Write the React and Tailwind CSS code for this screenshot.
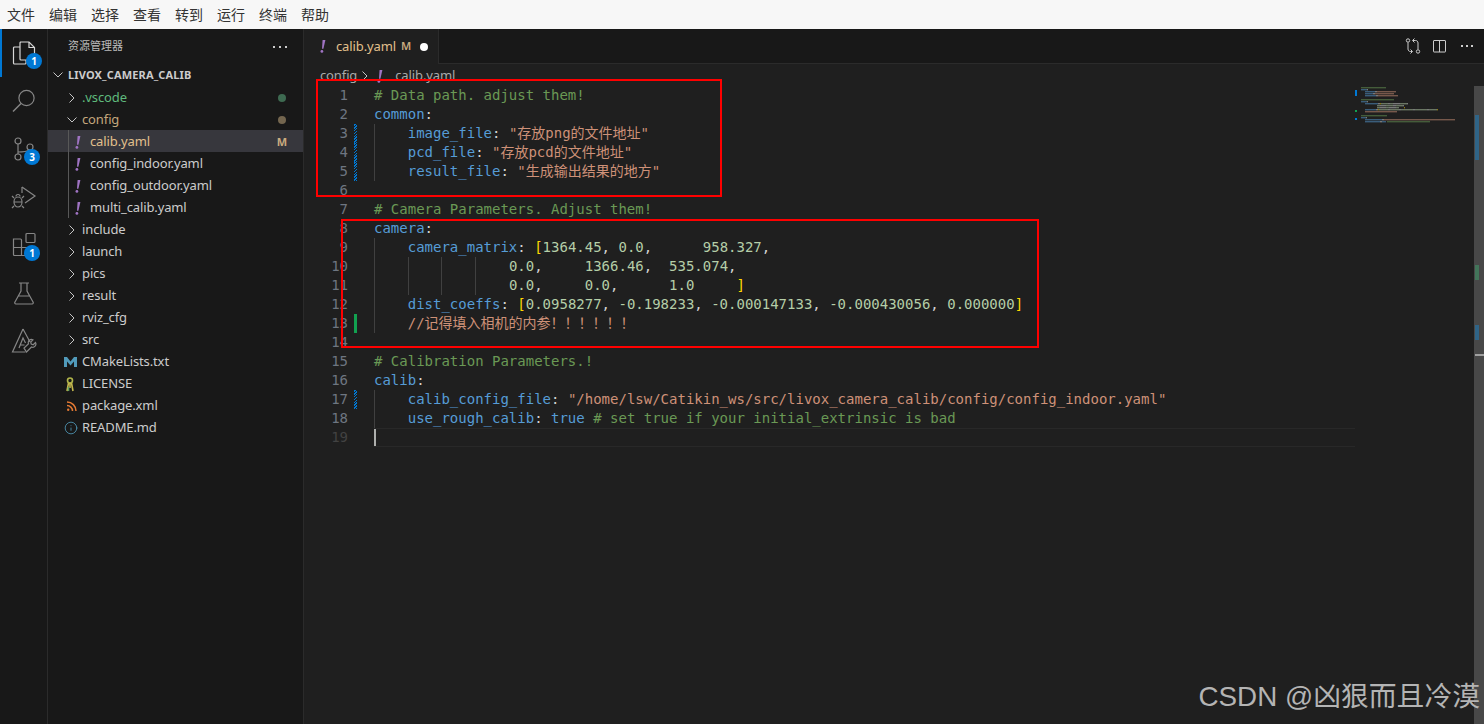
import React from 'react';
import { Info } from 'lucide-react';

const MONO = "font-['DejaVu_Sans_Mono','Noto_Sans_CJK_SC',monospace]";
const UI = "font-['Noto_Sans','Noto_Sans_CJK_SC',sans-serif]";

const tokenClass = {
    c: 'text-[#6a9955]',
    k: 'text-[#569cd6]',
    s: 'text-[#ce9178]',
    n: 'text-[#b5cea8]',
    p: 'text-[#d4d4d4]',
    b: 'text-[#ffd700]',
};
const minimapColor = { c: '#6a9955', k: '#569cd6', s: '#ce9178', n: '#b5cea8', p: '#d4d4d4', b: '#ffd700' };

// g = indent guides (each one is 4 columns), t = tokens after the indent
const codeLines = [
    { t: [['# Data path. adjust them!', 'c']] },
    { t: [['common', 'k'], [':', 'p']] },
    { g: 1, mark: 'mod', t: [['image_file', 'k'], [': ', 'p'], ['"存放png的文件地址"', 's']] },
    { g: 1, mark: 'mod', t: [['pcd_file', 'k'], [': ', 'p'], ['"存放pcd的文件地址"', 's']] },
    { g: 1, mark: 'mod', t: [['result_file', 'k'], [': ', 'p'], ['"生成输出结果的地方"', 's']] },
    { t: [] },
    { t: [['# Camera Parameters. Adjust them!', 'c']] },
    { t: [['camera', 'k'], [':', 'p']] },
    { g: 1, t: [['camera_matrix', 'k'], [': ', 'p'], ['[', 'b'], ['1364.45', 'n'], [', ', 'p'], ['0.0', 'n'], [',      ', 'p'], ['958.327', 'n'], [',', 'p']] },
    { g: 4, t: [['0.0', 'n'], [',     ', 'p'], ['1366.46', 'n'], [',  ', 'p'], ['535.074', 'n'], [',', 'p']] },
    { g: 4, t: [['0.0', 'n'], [',     ', 'p'], ['0.0', 'n'], [',      ', 'p'], ['1.0', 'n'], ['     ', 'p'], [']', 'b']] },
    { g: 1, t: [['dist_coeffs', 'k'], [': ', 'p'], ['[', 'b'], ['0.0958277', 'n'], [', ', 'p'], ['-0.198233', 'n'], [', ', 'p'], ['-0.000147133', 'n'], [', ', 'p'], ['-0.000430056', 'n'], [', ', 'p'], ['0.000000', 'n'], [']', 'b']] },
    { g: 1, mark: 'add', t: [['//记得填入相机的内参！！！！！！', 's']] },
    { t: [] },
    { t: [['# Calibration Parameters.!', 'c']] },
    { t: [['calib', 'k'], [':', 'p']] },
    { g: 1, mark: 'mod', t: [['calib_config_file', 'k'], [': ', 'p'], ['"/home/lsw/Catikin_ws/src/livox_camera_calib/config/config_indoor.yaml"', 's']] },
    { g: 1, t: [['use_rough_calib', 'k'], [': ', 'p'], ['true', 'k'], [' ', 'p'], ['# set true if your initial_extrinsic is bad', 'c']] },
    { t: [], current: true },
];

const menus = ['文件', '编辑', '选择', '查看', '转到', '运行', '终端', '帮助'];

function Badge({ n }) {
    return (
        <span className="absolute left-[24px] top-[24px] w-4 h-4 rounded-full bg-[#0078d4] text-white text-[10px] font-bold leading-4 text-center">
            {n}
        </span>
    );
}

function ActivityIcon({ active, badge, children }) {
    return (
        <div className={`relative w-12 h-12 flex items-center justify-center ${active ? 'text-[#d7d7d7] border-l-2 border-[#0078d4] pr-[2px]' : 'text-[#868686]'}`}>
            {children}
            {badge && <Badge n={badge} />}
        </div>
    );
}

function ActivityBar() {
    const s = { width: 26, height: 26, viewBox: '0 0 26 26', fill: 'none', stroke: 'currentColor', strokeWidth: 1.2 };
    return (
        <div className="w-12 shrink-0 bg-[#181818] border-r border-[#2b2b2b] flex flex-col">
            <ActivityIcon active badge="1">
                <svg {...s}>
                    <path d="M9 7H3.5a1 1 0 0 0-1 1v15a1 1 0 0 0 1 1H14a1 1 0 0 0 1-1v-3" />
                    <path d="M9 2h9l5.5 5.5V19a1 1 0 0 1-1 1H10a1 1 0 0 1-1-1V3a1 1 0 0 1 1-1z" />
                    <path d="M18 2v5.5h5.5" />
                </svg>
            </ActivityIcon>
            <ActivityIcon>
                <svg {...s}>
                    <circle cx="15.5" cy="10" r="7.6" />
                    <path d="M10 15.5 2 23.5" strokeWidth="1.5" />
                </svg>
            </ActivityIcon>
            <ActivityIcon badge="3">
                <svg {...s}>
                    <circle cx="7" cy="5" r="3" />
                    <circle cx="19" cy="11" r="3" />
                    <circle cx="7" cy="21" r="3" />
                    <path d="M7 8v10M7 16c6 0 10-1 12-2" />
                </svg>
            </ActivityIcon>
            <ActivityIcon>
                <svg {...s}>
                    <path d="M11 3l13 9-10 7" />
                    <path d="M11 3v6" />
                    <ellipse cx="7" cy="18" rx="4" ry="5" />
                    <path d="M3 18h8M3 14l-2-2M11 14l2-2M3 22l-2 2M11 22l2 2M5 12.5a2 2 0 0 1 4 0" />
                </svg>
            </ActivityIcon>
            <ActivityIcon badge="1">
                <svg {...s}>
                    <rect x="15" y="1.5" width="9" height="9" rx="1" />
                    <path d="M2.5 7h7a1 1 0 0 1 1 1v15.5H3.5a1 1 0 0 1-1-1zM2.5 15.5h17v7a1 1 0 0 1-1 1h-8" />
                </svg>
            </ActivityIcon>
            <ActivityIcon>
                <svg {...s}>
                    <path d="M8 3h10M10 3v8L4 22a1.2 1.2 0 0 0 1 2h16a1.2 1.2 0 0 0 1-2l-6-11V3M7 16h12" />
                </svg>
            </ActivityIcon>
            <ActivityIcon>
                <svg {...s}>
                    <path d="M12 1 1.5 24h13M12 1l7 13M8 20l4-10 2.5 5M9.5 17h4" />
                    <path d="M15.5 24l5-5a3.2 3.2 0 0 0 4-4.5l-2.3 2.2-2-.7-.5-2 2.2-2.2a3.2 3.2 0 0 0-4.4 4L13 20z" />
                </svg>
            </ActivityIcon>
        </div>
    );
}

function Chevron({ open, className = '' }) {
    return (
        <svg width="10" height="10" viewBox="0 0 10 10" fill="none" stroke="#c5c5c5" strokeWidth="1" className={className}>
            {open ? <path d="M0.5 2.5 5 7l4.5-4.5" /> : <path d="M2.5 0.5 7 5 2.5 9.5" />}
        </svg>
    );
}

// seti yaml icon, a slanted purple exclamation mark
function YamlIcon({ className = '' }) {
    return (
        <span className={`inline-flex items-center ${className}`}>
            <svg width="6" height="13" viewBox="0 0 6 13" fill="#a074c4">
                <path d="M2.6 0h2.8L3.4 8.8H2z" />
                <circle cx="1.9" cy="11.4" r="1.4" />
            </svg>
        </span>
    );
}

function Folder({ name, open, color = 'text-[#cccccc]', dot }) {
    return (
        <div className="h-[22px] flex items-center pt-[2px] pl-[19px] pr-[17px]">
            <Chevron open={open} className="w-[10px] shrink-0" />
            <span className={`ml-[5px] ${color}`}>{name}</span>
            {dot && <span className={`ml-auto w-2 h-2 rounded-full ${dot}`} />}
        </div>
    );
}

function YamlRow({ name, selected }) {
    return (
        <div className={`h-[22px] flex items-center pt-[2px] pl-[27px] pr-[16px] ${selected ? 'bg-[#37373d] text-[#e2c08d]' : 'text-[#cccccc]'}`}>
            <YamlIcon className="w-[15px] shrink-0" />
            <span>{name}</span>
            {selected && <span className="ml-auto text-[11px] font-bold text-[#c9ab7f]">M</span>}
        </div>
    );
}

function FileRow({ icon, name }) {
    return (
        <div className="h-[22px] flex items-center pt-[2px] pl-[16px] text-[#cccccc]">
            <span className="w-[18px] shrink-0 flex items-center justify-start">{icon}</span>
            <span>{name}</span>
        </div>
    );
}

function Sidebar() {
    return (
        <div className={`w-[256px] shrink-0 bg-[#181818] border-r border-[#2b2b2b] text-[13px] tracking-[-0.12px] ${UI}`}>
            <div className="h-[35px] flex items-center justify-between pl-5 pr-[16px] text-[11px] tracking-normal text-[#bbbbbb]">
                <span>资源管理器</span>
                <span className="flex gap-[4px]">
                    <i className="w-[2px] h-[2px] bg-[#cccccc]" />
                    <i className="w-[2px] h-[2px] bg-[#cccccc]" />
                    <i className="w-[2px] h-[2px] bg-[#cccccc]" />
                </span>
            </div>
            <div className="h-[22px] flex items-center pl-[5px] text-[11px] font-bold tracking-[0.15px] text-[#cccccc]">
                <Chevron open className="w-[10px] shrink-0" />
                <span className="ml-[5px]">LIVOX_CAMERA_CALIB</span>
            </div>
            <Folder name=".vscode" color="text-[#5fba7d]" dot="bg-[#3e6a51]" />
            <Folder name="config" open color="text-[#c4a77d]" dot="bg-[#74664f]" />
            <div className="relative">
                <YamlRow name="calib.yaml" selected />
                <YamlRow name="config_indoor.yaml" />
                <YamlRow name="config_outdoor.yaml" />
                <YamlRow name="multi_calib.yaml" />
                <div className="absolute left-[20px] top-0 bottom-0 w-px bg-[#585858]" />
            </div>
            {['include', 'launch', 'pics', 'result', 'rviz_cfg', 'src'].map((f) => (
                <Folder key={f} name={f} />
            ))}
            <FileRow
                name="CMakeLists.txt"
                icon={
                    <svg width="13" height="12" viewBox="0 0 13 12" fill="#519aba">
                        <path d="M0 1h3l3.5 4.5L10 1h3v10h-3V5.5L6.5 9.5 3 5.5V11H0z" />
                    </svg>
                }
            />
            <FileRow
                name="LICENSE"
                icon={
                    <svg width="12" height="15" viewBox="0 0 12 15" fill="none" strokeWidth="1.6">
                        <circle cx="6" cy="3.5" r="2.5" stroke="#b0b44a" />
                        <path d="M4.5 6 3 14M7.5 6 9 14M6 6v5" stroke="#c6b94f" />
                        <path d="M4.5 10v4" stroke="#5fa05f" />
                    </svg>
                }
            />
            <FileRow
                name="package.xml"
                icon={
                    <svg width="12" height="12" viewBox="0 0 12 12" fill="none" stroke="#e37933" strokeWidth="1.5" className="ml-[2px]">
                        <path d="M1 2c5 0 9 4 9 9M1 5.5c3 0 5.5 2.5 5.5 5.5" />
                        <circle cx="2.2" cy="9.8" r="1.2" fill="#e37933" stroke="none" />
                    </svg>
                }
            />
            <FileRow name="README.md" icon={<Info size={14} color="#519aba" strokeWidth={1.4} />} />
        </div>
    );
}

function TabBar() {
    return (
        <div className="h-[35px] shrink-0 flex bg-[#181818]">
            <div className={`w-[135px] flex items-center pl-[16px] bg-[#1f1f1f] border-r border-[#2b2b2b] text-[13px] tracking-[-0.12px] text-[#e2c08d] ${UI}`}>
                <YamlIcon className="w-[16px]" />
                <span>calib.yaml</span>
                <span className="ml-[5px] text-[11px] font-semibold text-[#c9ab7f]">M</span>
                <span className="ml-[9px] w-2 h-2 rounded-full bg-white" />
            </div>
            <div className="flex-1 border-b border-[#2b2b2b] flex items-center justify-end gap-[11px] pr-[9px]">
                <svg width="16" height="16" viewBox="0 0 16 16" fill="none" stroke="#cccccc" strokeWidth="1">
                    <circle cx="3" cy="2.5" r="1.7" />
                    <circle cx="13" cy="13.5" r="1.7" />
                    <path d="M3 4.5V11c0 1.5 1 2.5 2.5 2.5H7M13 11.5V5c0-1.5-1-2.5-2.5-2.5H8M9.5 0.5l-2 2 2 2M5.5 11.5l2 2-2 2" />
                </svg>
                <svg width="16" height="16" viewBox="0 0 16 16" fill="none" stroke="#cccccc" strokeWidth="1">
                    <rect x="1.5" y="2.5" width="12" height="11.5" rx="0.5" />
                    <path d="M7.5 2.5V14" />
                </svg>
                <span className="w-4 flex justify-center gap-[3px]">
                    <i className="w-[2px] h-[2px] bg-[#cccccc]" />
                    <i className="w-[2px] h-[2px] bg-[#cccccc]" />
                    <i className="w-[2px] h-[2px] bg-[#cccccc]" />
                </span>
            </div>
        </div>
    );
}

function Breadcrumb() {
    return (
        <div className={`h-[22px] shrink-0 flex items-center pt-[2px] pl-[16px] text-[13px] tracking-[-0.12px] text-[#a9a9a9] ${UI}`}>
            <span>config</span>
            <Chevron className="mx-[3px]" />
            <YamlIcon className="ml-[4px] w-[18px]" />
            <span>calib.yaml</span>
        </div>
    );
}

function CodeLine({ line, n }) {
    return (
        <div className="h-[19px] flex leading-[19px]">
            <div className={`w-[44px] shrink-0 text-right ${line.current ? 'text-[#424242]' : 'text-[#6e7681]'}`}>{n}</div>
            <div className="w-[26px] shrink-0 pl-[6px] pr-[15px]">
                {line.mark === 'mod' && <div className="w-[3px] h-[19px] bg-[repeating-linear-gradient(-45deg,#0078d4,#0078d4_1px,#1f1f1f_1px,#1f1f1f_2px)]" />}
                {line.mark === 'add' && <div className="w-[3px] h-[19px] bg-[#12a150]" />}
            </div>
            <div className={`flex-1 whitespace-pre relative ${line.current ? 'border-y border-[#282828] h-[19px] leading-[17px]' : ''}`}>
                {Array.from({ length: line.g || 0 }).map((_, i) => (
                    <span key={i} className="inline-block w-[33.72px] border-l border-[#404040]"> </span>
                ))}
                {line.t.map(([text, type], i) => (
                    <span key={i} className={tokenClass[type]}>{text}</span>
                ))}
                {line.current && <span className="absolute left-0 top-0 bottom-0 w-[2px] bg-[#aeafad]" />}
            </div>
        </div>
    );
}

function Minimap() {
    const rects = [];
    codeLines.forEach((line, i) => {
        let x = (line.g || 0) * 4;
        line.t.forEach(([text, type]) => {
            const w = Array.from(text).reduce((a, ch) => a + (ch.charCodeAt(0) > 255 ? 2 : 1), 0);
            if (text.trim()) {
                rects.push(<rect key={`${i}-${x}`} x={x + 6} y={i * 2 + 1} width={w} height={1.4} fill={minimapColor[type]} opacity="0.5" />);
            }
            x += w;
        });
    });
    return (
        <div className="w-[129px] shrink-0 flex">
            <svg width="104" height="60" viewBox="0 0 104 60" className="shrink-0">
                <rect x="0" y="4" width="2" height="6" fill="#0078d4" />
                <rect x="0" y="24" width="2" height="2" fill="#12a150" />
                <rect x="0" y="32" width="2" height="2" fill="#0078d4" />
                {rects}
            </svg>
            <div className="ml-auto w-[10px] h-full relative bg-[#484848]">
                <div className="absolute left-[1px] top-[29px] w-1 h-[45px] bg-[#2f6487]" />
                <div className="absolute left-[1px] top-[179px] w-1 h-[15px] bg-[#42755a]" />
                <div className="absolute left-[1px] top-[239px] w-1 h-[15px] bg-[#2f6487]" />
                <div className="absolute left-[1px] right-0 top-[268px] h-[2px] bg-[#a0a0a0]" />
            </div>
        </div>
    );
}

function Editor() {
    return (
        <div className="flex-1 min-w-0 bg-[#1f1f1f] flex flex-col relative">
            <TabBar />
            <Breadcrumb />
            <div className="flex-1 flex min-h-0">
                <div className={`flex-1 min-w-0 text-[14px] ${MONO}`}>
                    {codeLines.map((line, i) => (
                        <CodeLine key={i} line={line} n={i + 1} />
                    ))}
                </div>
                <Minimap />
            </div>
            {/* red annotation boxes */}
            <div className="absolute left-[12px] top-[50px] w-[406px] h-[118px] border-[2px] border-[#ff0000]" />
            <div className="absolute left-[37px] top-[190px] w-[698px] h-[129px] border-[2px] border-[#ff0000]" />
        </div>
    );
}

export default function App() {
    return (
        <div className="relative h-screen w-full flex flex-col overflow-hidden bg-[#181818]">
            <div className={`h-[29px] shrink-0 flex items-center bg-[#f7f7f7] text-[14px] text-[#333333] pl-[7px] gap-[14px] ${UI}`}>
                {menus.map((m) => (
                    <span key={m}>{m}</span>
                ))}
            </div>
            <div className="flex-1 flex min-h-0">
                <ActivityBar />
                <Sidebar />
                <Editor />
            </div>
            <div className="absolute right-[4px] bottom-[10px] text-[27.8px] leading-[34px] text-[#b4b4b4] font-['Liberation_Sans','Noto_Sans_CJK_SC',sans-serif]">
                CSDN @凶狠而且冷漠
            </div>
        </div>
    );
}
